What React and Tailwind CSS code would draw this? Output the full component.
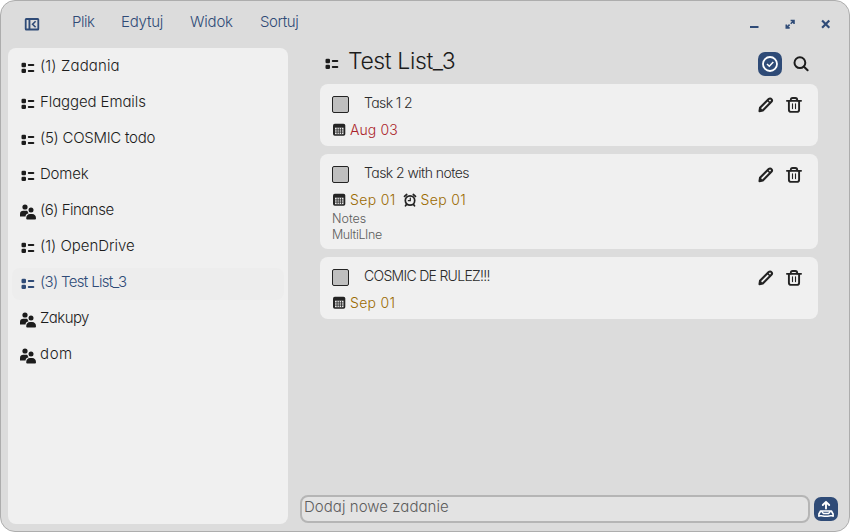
import React from "react";

const MENU = [
  { label: "Plik", cls: "w-[49px] tracking-[-0.5px]" },
  { label: "Edytuj", cls: "w-[69px] tracking-[-0.2px]" },
  { label: "Widok", cls: "w-[70px] tracking-[-0.2px]" },
  { label: "Sortuj", cls: "tracking-[-0.4px]" },
];

const LISTS = [
  { label: "(1) Zadania", cls: "tracking-[0.12px]" },
  { label: "Flagged Emails", cls: "tracking-[-0.1px]" },
  { label: "(5) COSMIC todo", cls: "tracking-[-0.27px]" },
  { label: "Domek", cls: "tracking-[-0.2px]" },
  { label: "(6) Finanse", shared: true, cls: "tracking-[-0.5px]" },
  { label: "(1) OpenDrive", cls: "tracking-[-0.03px]" },
  { label: "(3) Test List_3", active: true, cls: "tracking-[-0.68px]" },
  { label: "Zakupy", shared: true, cls: "tracking-[-0.55px]" },
  { label: "dom", shared: true, cls: "tracking-[0.6px]" },
];

const TASKS = [
  { title: "Task 1 2", cls: "tracking-[-0.6px]", height: "h-[62px]", due: "Aug 03", dueCls: "text-[#ab1f2a] tracking-[0.1px]" },
  {
    title: "Task 2 with notes", cls: "tracking-[-0.55px]", height: "h-[95px]", due: "Sep 01",
    dueCls: "text-[#9b6a00] tracking-[0.35px]", reminder: "Sep 01", notes: true,
  },
  { title: "COSMIC DE RULEZ!!!", cls: "tracking-[-0.7px]", height: "h-[62px]", due: "Sep 01", dueCls: "text-[#9b6a00] tracking-[0.3px]" },
];

function ListIcon() {
  return (
    <svg className="size-4 shrink-0" viewBox="0 0 16 16" fill="currentColor">
      <rect x="1.5" y="2.800" width="4.500" height="4.400" rx="1.300" />
      <rect x="1.5" y="8.700" width="4.500" height="4.400" rx="1.300" />
      <rect x="7.800" y="4" width="6.500" height="2" rx=".9" />
      <rect x="7.800" y="10" width="6.500" height="2" rx=".9" />
    </svg>
  );
}

function PeopleIcon() {
  return (
    <svg className="size-4 shrink-0" viewBox="0 0 16 16" fill="currentColor">
      <circle cx="5" cy="3" r="2.600" />
      <path d="M0 12.500V10c0-2 1.400-3.200 3.300-3.200H6c.6 0 1 .1 1.400.3.200 1 .7 1.700 1.200 2.100C6.800 9.500 5.700 10.700 5.500 12.500Z" />
      <circle cx="11" cy="6.100" r="2.500" />
      <path d="M6.200 14.300c0-2.500 1.500-4.300 3.800-4.300h2.200c2.300 0 3.800 1.800 3.800 4.300 0 .8-.5 1.300-1.300 1.300H7.500c-.8 0-1.300-.5-1.300-1.300Z" />
    </svg>
  );
}

function CalendarIcon() {
  return (
    <svg className="size-[14px] shrink-0" viewBox="0 0 14 14">
      <rect x="1" y=".7" width="12.300" height="12" rx="1.800" fill="#232323" />
      <path d="M3 4.700h8.500v6.500H3Z" fill="#e9e9e9" />
      <path d="M3 6.900h8.500M3 9.100h8.500M5.100 4.700v6.500M7.300 4.700v6.500M9.500 4.700v6.500" stroke="#232323" strokeWidth=".8" />
    </svg>
  );
}

function AlarmIcon() {
  return (
    <svg className="size-[14px] shrink-0" viewBox="0 0 14 14" fill="none" stroke="#232323" strokeLinecap="round">
      <circle cx="7" cy="7.500" r="4.700" strokeWidth="1.700" />
      <path d="M1.500 3.400 3.700 1.500M12.500 3.400 10.300 1.500M3.600 11.400 2.500 12.800M10.400 11.400l1.100 1.400" strokeWidth="1.700" />
      <path d="M7.300 5v2.700H5.300" strokeWidth="1.200" />
    </svg>
  );
}

function PencilIcon() {
  return (
    <svg className="size-4" viewBox="0 0 16 16" fill="none" stroke="#232323" strokeWidth="2.100" strokeLinejoin="round">
      <path d="M1.500 14.100 2 10.800 10.700 2.100c.8-.8 2-.8 2.700 0s.8 1.900 0 2.700L4.800 13.500Z" />
      <path d="M9.400 3.200l2.900 2.900" strokeWidth="1.500" />
      <path d="M1.500 14.200 2.200 10.800l2.700 2.700Z" fill="#232323" strokeWidth=".8" />
    </svg>
  );
}

function TrashIcon() {
  return (
    <svg className="size-4" viewBox="0 0 16 16" fill="none" stroke="#232323" strokeLinecap="round">
      <path d="M.9 3.800h14.200" strokeWidth="1.800" />
      <path d="M4.700 3.500C4.700 1.700 5.400 1 6.700 1h2.600c1.300 0 2 .7 2 2.500" strokeWidth="1.800" />
      <path d="M2.900 4.200v8.500c0 1.400.8 2.200 2.200 2.200h5.800c1.400 0 2.200-.8 2.200-2.200V4.200" strokeWidth="1.900" />
      <path d="M6.500 6.900v4.700M9.500 6.900v4.700" strokeWidth="1.100" />
    </svg>
  );
}

function TitleBar() {
  return (
    <header className="flex h-[47px] shrink-0 text-[#2f4b77]">
      <svg className="ml-[23px] mt-[15px] size-4" viewBox="0 0 16 16">
        <path fillRule="evenodd" fill="currentColor" d="M2.300 2h11.400A1.500 1.500 0 0 1 15.200 3.500v9.500a1.500 1.500 0 0 1-1.500 1.500H2.300A1.500 1.500 0 0 1 .8 13V3.500A1.500 1.500 0 0 1 2.300 2ZM2.600 3.900v8.700h1.900V3.900ZM6.400 3.900v8.700h7V3.900Z" />
        <path d="M11.600 5.200 8.600 8.200l3 3" fill="none" stroke="currentColor" strokeWidth="1.600" />
      </svg>
      <nav className="ml-[32px] mt-[11px] flex text-[15px] leading-5">
        {MENU.map((m) => (
          <span key={m.label} className={m.cls}>{m.label}</span>
        ))}
      </nav>
      <div className="ml-auto mr-[15px] mt-[15px] flex gap-5">
        <svg className="size-4" viewBox="0 0 16 16"><path d="M4 11h8.500" stroke="currentColor" strokeWidth="2" /></svg>
        <svg className="size-4" viewBox="0 0 16 16" fill="none" stroke="currentColor" strokeWidth="1.600">
          <path d="M8.600 4.500h3.400v3.400M12 4.500 8.700 7.800M4.300 8.500v3.400h3.400M4.300 11.900l3.300-3.300" />
        </svg>
        <svg className="size-4" viewBox="0 0 16 16"><path d="m4.100 4.500 7.200 7.200m0-7.200-7.200 7.200" stroke="currentColor" strokeWidth="2.200" /></svg>
      </div>
    </header>
  );
}

function Sidebar() {
  return (
    <aside className="flex w-[280px] flex-col gap-1 rounded-lg bg-[#f0f0f0] p-1">
      {LISTS.map((l) => (
        <div
          key={l.label}
          className={`flex h-8 shrink-0 items-center gap-1 rounded-lg px-2 ${l.active ? "bg-[#ededed] text-[#2f4b77]" : "text-[#1c1c1c]"}`}
        >
          {l.shared ? <PeopleIcon /> : <ListIcon />}
          <span className={`-mt-[5px] text-[15px] leading-5 ${l.cls}`}>{l.label}</span>
        </div>
      ))}
    </aside>
  );
}

function TaskCard({ task }) {
  return (
    <article className={`flex flex-col rounded-lg bg-[#f0f0f0] pl-3 pr-4 ${task.height}`}>
      <div className="mt-3 flex h-[18px] shrink-0 items-center">
        <span className="-mt-px size-[17px] shrink-0 rounded-[2px] border border-[#232323] bg-[#bfbfbf]" />
        <span className={`-mt-[4px] ml-[15px] text-[14px] leading-4 text-[#2a2a2a] ${task.cls}`}>{task.title}</span>
        <div className="ml-auto flex gap-3">
          <PencilIcon />
          <TrashIcon />
        </div>
      </div>
      <div className="mt-[7px] flex h-[18px] shrink-0 items-center text-[14px] leading-4">
        <CalendarIcon />
        <span className={`ml-1 ${task.dueCls}`}>{task.due}</span>
        {task.reminder && (
          <>
            <span className="ml-[7px] flex"><AlarmIcon /></span>
            <span className={`ml-[4px] ${task.dueCls}`}>{task.reminder}</span>
          </>
        )}
      </div>
      {task.notes && (
        <div className="mt-[2px] text-[12.5px] leading-4 text-[#5c5c5c]">
          <div>Notes</div>
          <div className="tracking-[-0.4px]">MultiLIne</div>
        </div>
      )}
    </article>
  );
}

export default function App() {
  return (
    <div className="h-[532px] w-[850px] bg-white">
      <div
        className="flex h-full flex-col rounded-[15px] border border-[#adadad] bg-[#dcdcdc] font-light"
        style={{ fontFamily: 'Inter, "Liberation Sans", sans-serif', fontFeatureSettings: '"cv11"' }}
      >
        <TitleBar />
        <div className="flex min-h-0 flex-1 pb-[7px] pl-[7px]">
          <Sidebar />
          <main className="flex flex-1 flex-col pl-3">
            <div className="flex h-9 shrink-0 items-start pl-6 text-[#1c1c1c]">
              <div className="mt-2"><ListIcon /></div>
              <h1 className="-mt-[3px] ml-[8px] text-[23px] leading-8 tracking-[-0.4px]">Test List_3</h1>
              <div className="ml-auto mr-[40px] mt-1 flex items-center gap-[11px]">
                <svg className="size-6" viewBox="0 0 24 24" fill="none" stroke="#fff">
                  <rect width="24" height="24" rx="7" fill="#2f4b77" stroke="none" />
                  <circle cx="12" cy="12" r="7" strokeWidth="1.800" />
                  <path d="m9 12 2.300 2.200 4-4.300" strokeWidth="1.500" />
                </svg>
                <svg className="size-4" viewBox="0 0 16 16" fill="none" stroke="#1c1c1c" strokeWidth="2" strokeLinecap="round">
                  <circle cx="6.900" cy="6.700" r="5.400" />
                  <path d="m11 10.800 3.600 3.500" />
                </svg>
              </div>
            </div>
            <div className="flex flex-col gap-2 pl-5 pr-[31px]">
              {TASKS.map((t) => <TaskCard key={t.title} task={t} />)}
            </div>
            <div className="mb-px mt-auto flex items-center gap-1 pr-[11px]">
              <div className="h-7 flex-1 rounded-lg border-2 border-[#b5b5b5] bg-[#e3e3e3] pl-[2px] text-[15px] leading-5 tracking-[0.05px] text-[#5c5c5c]">
                Dodaj nowe zadanie
              </div>
              <svg className="size-6" viewBox="0 0 24 24" fill="none" stroke="#fff" strokeLinecap="round" strokeLinejoin="round">
                <rect width="24" height="24" rx="7" fill="#2f4b77" stroke="none" />
                <path d="M12 11.500V5M8.800 8 12 4.800 15.200 8" strokeWidth="1.900" />
                <path d="M4.900 19.300V17L6.600 14h10.800l1.700 3v2.300" strokeWidth="1.600" />
                <path d="M5.200 18.700h2.300c1.100 0 1.900.6 4.500.6s3.400-.6 4.500-.6h2.300M7.800 14.500 9.500 16.600h5L16.200 14.500" strokeWidth="1.500" />
              </svg>
            </div>
          </main>
        </div>
      </div>
    </div>
  );
}
